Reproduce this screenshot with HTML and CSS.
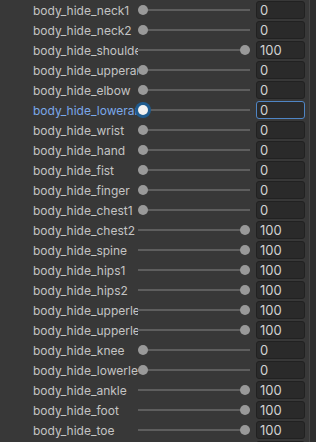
FILE: index.html
```html
<!DOCTYPE html>
<html lang="en">
<head>
  <meta charset="UTF-8" />
  <title>Body Hide</title>
  <link rel="stylesheet" href="styles.css">
</head>
<body>
  <div class="panel">
    <div class="list">
      <div class="row"><span class="label">body_hide_neck1</span><div class="slider"><span class="track"></span><span class="thumb" style="left: 0%"></span></div><div class="field">0</div></div>
      <div class="row"><span class="label">body_hide_neck2</span><div class="slider"><span class="track"></span><span class="thumb" style="left: 0%"></span></div><div class="field">0</div></div>
      <div class="row"><span class="label">body_hide_shoulder</span><div class="slider"><span class="track"></span><span class="thumb" style="left: 100%"></span></div><div class="field">100</div></div>
      <div class="row"><span class="label">body_hide_upperarm</span><div class="slider"><span class="track"></span><span class="thumb" style="left: 0%"></span></div><div class="field">0</div></div>
      <div class="row"><span class="label">body_hide_elbow</span><div class="slider"><span class="track"></span><span class="thumb" style="left: 0%"></span></div><div class="field">0</div></div>
      <div class="row active"><span class="label">body_hide_lowerarm</span><div class="slider"><span class="track"></span><span class="thumb" style="left: 0%"></span></div><div class="field">0</div></div>
      <div class="row"><span class="label">body_hide_wrist</span><div class="slider"><span class="track"></span><span class="thumb" style="left: 0%"></span></div><div class="field">0</div></div>
      <div class="row"><span class="label">body_hide_hand</span><div class="slider"><span class="track"></span><span class="thumb" style="left: 0%"></span></div><div class="field">0</div></div>
      <div class="row"><span class="label">body_hide_fist</span><div class="slider"><span class="track"></span><span class="thumb" style="left: 0%"></span></div><div class="field">0</div></div>
      <div class="row"><span class="label">body_hide_finger</span><div class="slider"><span class="track"></span><span class="thumb" style="left: 0%"></span></div><div class="field">0</div></div>
      <div class="row"><span class="label">body_hide_chest1</span><div class="slider"><span class="track"></span><span class="thumb" style="left: 0%"></span></div><div class="field">0</div></div>
      <div class="row"><span class="label">body_hide_chest2</span><div class="slider"><span class="track"></span><span class="thumb" style="left: 100%"></span></div><div class="field">100</div></div>
      <div class="row"><span class="label">body_hide_spine</span><div class="slider"><span class="track"></span><span class="thumb" style="left: 100%"></span></div><div class="field">100</div></div>
      <div class="row"><span class="label">body_hide_hips1</span><div class="slider"><span class="track"></span><span class="thumb" style="left: 100%"></span></div><div class="field">100</div></div>
      <div class="row"><span class="label">body_hide_hips2</span><div class="slider"><span class="track"></span><span class="thumb" style="left: 100%"></span></div><div class="field">100</div></div>
      <div class="row"><span class="label">body_hide_upperleg1</span><div class="slider"><span class="track"></span><span class="thumb" style="left: 100%"></span></div><div class="field">100</div></div>
      <div class="row"><span class="label">body_hide_upperleg2</span><div class="slider"><span class="track"></span><span class="thumb" style="left: 100%"></span></div><div class="field">100</div></div>
      <div class="row"><span class="label">body_hide_knee</span><div class="slider"><span class="track"></span><span class="thumb" style="left: 0%"></span></div><div class="field">0</div></div>
      <div class="row"><span class="label">body_hide_lowerleg</span><div class="slider"><span class="track"></span><span class="thumb" style="left: 0%"></span></div><div class="field">0</div></div>
      <div class="row"><span class="label">body_hide_ankle</span><div class="slider"><span class="track"></span><span class="thumb" style="left: 100%"></span></div><div class="field">100</div></div>
      <div class="row"><span class="label">body_hide_foot</span><div class="slider"><span class="track"></span><span class="thumb" style="left: 100%"></span></div><div class="field">100</div></div>
      <div class="row"><span class="label">body_hide_toe</span><div class="slider"><span class="track"></span><span class="thumb" style="left: 100%"></span></div><div class="field">100</div></div>
      <div class="row"><span class="label">body_hide_toe2</span><div class="slider"><span class="track"></span><span class="thumb" style="left: 100%"></span></div><div class="field">100</div></div>
    </div>
    <div class="scroll"></div>
  </div>
</body>
</html>
```

FILE: styles.css
```css
* { box-sizing: border-box; margin: 0; padding: 0; }
html, body { height: 100%; overflow: hidden; }
body {
  background: #383838;
  font-family: 'Inter', 'Noto Sans', sans-serif;
  font-size: 12px;
  color: #c4c4c4;
}
.panel { display: flex; height: 100%; }
.list { flex: 1; }
.scroll { width: 7px; border-left: 1px solid #474747; background: #2f2f2f; }

.row {
  display: flex; align-items: center;
  height: 20px; padding-left: 33px;
}
.label {
  width: 105px; flex: none;
  white-space: nowrap; overflow: hidden;
  line-height: 20px; padding-top: 1px;
}
.slider { position: relative; width: 112px; height: 20px; flex: none; }
.track {
  position: absolute; left: 0; right: 0; top: 9px;
  height: 2px; background: #5e5e5e;
}
.thumb {
  position: absolute; top: 5px;
  width: 10px; height: 10px; border-radius: 50%;
  background: #999999;
}
.thumb[style*="left: 100%"] { margin-left: -10px; }
.field {
  width: 49px; height: 18px; margin-left: 6px; flex: none;
  background: #2a2a2a; border: 1px solid #212121; border-radius: 3px;
  padding-left: 3px; line-height: 17px;
  font-size: 13px; color: #d2d2d2;
}

.active .label { color: #7ba8ea; }
.active .thumb {
  background: #f2f2f2;
  box-shadow: 0 0 0 3px #1f5b8e;
}
.active .field { border-color: #4f85c4; }
```
